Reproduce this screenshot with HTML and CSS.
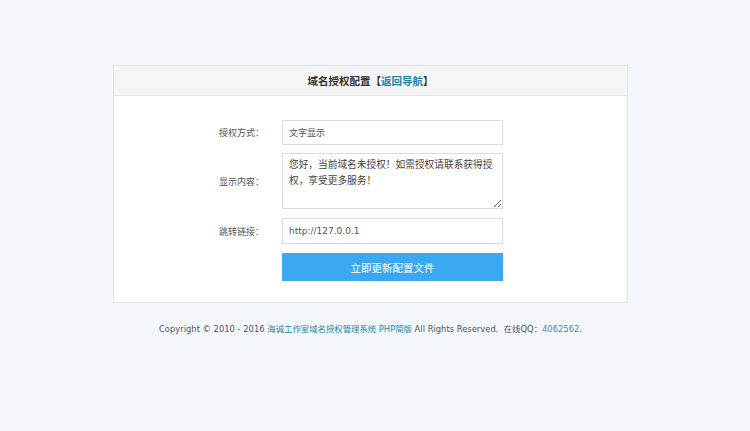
FILE: index.html
```html
<!DOCTYPE html>
<html lang="zh-CN">
<head>
<meta charset="utf-8">
<title>域名授权配置</title>
<link rel="stylesheet" href="styles.css">
</head>
<body>
<div class="panel">
  <div class="panel-head">域名授权配置【<a href="#" class="nav-link">返回导航</a>】</div>
  <form class="panel-body">
    <div class="row">
      <label class="label">授权方式：</label>
      <input class="field" type="text" value="文字显示">
    </div>
    <div class="row">
      <label class="label">显示内容：</label>
      <textarea class="field area">您好，当前域名未授权！如需授权请联系获得授权，享受更多服务！</textarea>
    </div>
    <div class="row spaced">
      <label class="label">跳转链接：</label>
      <input class="field url" type="text" value="http://127.0.0.1">
    </div>
    <div class="row spaced">
      <span class="label"></span>
      <button class="btn" type="button">立即更新配置文件</button>
    </div>
  </form>
</div>
<div class="footer">Copyright © 2010 - 2016 <a href="#" class="f-link">海诚工作室域名授权管理系统 PHP简版</a> All Rights Reserved.&nbsp; 在线QQ：<a href="#" class="qq">4062562</a>.</div>
</body>
</html>
```
FILE: styles.css
```css
html, body {
  margin: 0;
  padding: 0;
  background: #f3f6fb;
  font-family: "DejaVu Sans", "Noto Sans CJK SC", sans-serif;
  color: #444;
}
body {
  padding-top: 65px;
}
.panel {
  width: 513px;
  margin-left: 113px;
  background: #fff;
  border: 1px solid #e3e3e3;
}
.panel-head {
  height: 29px;
  line-height: 29px;
  background: #f5f5f5;
  border-bottom: 1px solid #e8e8e8;
  text-align: center;
  font-family: "Noto Sans CJK SC", sans-serif;
  font-size: 10.5px;
  font-weight: bold;
  color: #333;
}
.nav-link {
  color: #1b82aa;
  text-decoration: none;
}
.panel-body {
  display: flex;
  flex-direction: column;
  gap: 8px;
  padding: 24px 0 21px;
  margin: 0;
}
.row {
  display: flex;
  align-items: center;
}
.spaced {
  margin-top: 1px;
}
.label {
  width: 150px;
  flex: none;
  text-align: right;
  font-family: "Noto Sans CJK SC", sans-serif;
  font-size: 9px;
  color: #555;
  margin-right: 18px;
}
.field {
  box-sizing: border-box;
  width: 221px;
  height: 25px;
  border: 1px solid #dcdcdc;
  background: #fff;
  padding: 0 6px;
  margin: 0;
  font-family: "Noto Sans CJK SC", sans-serif;
  font-size: 9px;
  color: #555;
  outline: none;
}
.area {
  height: 56px;
  padding: 2px 6px;
  line-height: 16px;
  font-size: 9.7px;
  color: #444;
}
.url {
  height: 26px;
  font-family: "DejaVu Sans", sans-serif;
  font-size: 9px;
  color: #555;
}
.btn {
  width: 221px;
  height: 28px;
  border: 0;
  background: #3aa9f1;
  color: #fff;
  font-family: "Noto Sans CJK SC", sans-serif;
  font-size: 10.5px;
  padding: 0;
  margin: 0;
}
.footer {
  width: 515px;
  margin-left: 113px;
  margin-top: 19px;
  text-align: center;
  font-family: "DejaVu Sans", "Noto Sans CJK SC", sans-serif;
  font-size: 8.4px;
  color: #555;
}
.f-link {
  color: #1a8aa0;
  text-decoration: none;
}
.qq {
  color: #4a8ab5;
  text-decoration: none;
}
```
